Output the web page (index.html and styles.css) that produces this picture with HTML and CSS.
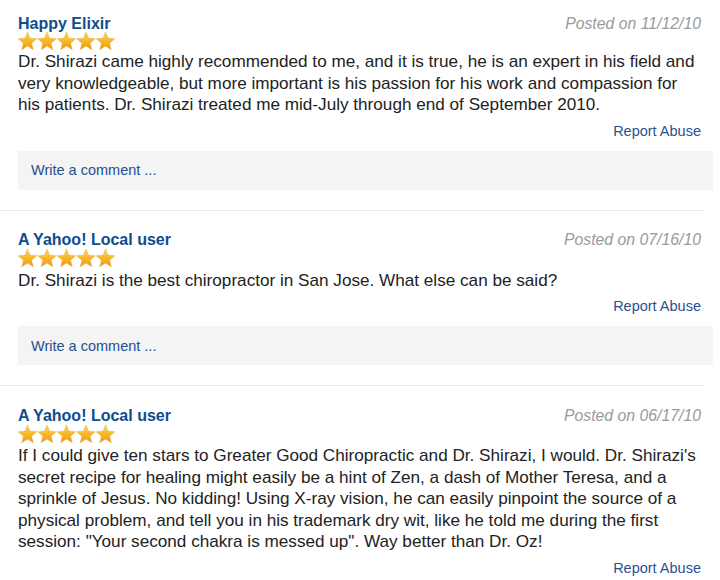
FILE: index.html
```html
<!DOCTYPE html>
<html>
<head>
<meta charset="utf-8">
<link rel="stylesheet" href="styles.css">
</head>
<body>
<div class="reviews">
  <div class="review first">
    <div class="head"><a class="name">Happy Elixir</a><span class="date">Posted on 11/12/10</span></div>
    <div class="stars"><svg width="98" height="18" viewBox="0 0 98 18"><defs><linearGradient id="sg1" x1="0" y1="0" x2="0" y2="1"><stop offset="0" stop-color="#ffd95a"/><stop offset="0.55" stop-color="#f6b526"/><stop offset="1" stop-color="#ea9a0c"/></linearGradient></defs><g fill="url(#sg1)" stroke="#e3a02a" stroke-width="0.4"><path d="M9.5 0 L12.03 6.32 L18.82 6.77 L13.59 11.13 L15.26 17.73 L9.5 14.1 L3.74 17.73 L5.41 11.13 L0.18 6.77 L6.97 6.32 Z"/><path transform="translate(19.5 0)" d="M9.5 0 L12.03 6.32 L18.82 6.77 L13.59 11.13 L15.26 17.73 L9.5 14.1 L3.74 17.73 L5.41 11.13 L0.18 6.77 L6.97 6.32 Z"/><path transform="translate(39 0)" d="M9.5 0 L12.03 6.32 L18.82 6.77 L13.59 11.13 L15.26 17.73 L9.5 14.1 L3.74 17.73 L5.41 11.13 L0.18 6.77 L6.97 6.32 Z"/><path transform="translate(58.5 0)" d="M9.5 0 L12.03 6.32 L18.82 6.77 L13.59 11.13 L15.26 17.73 L9.5 14.1 L3.74 17.73 L5.41 11.13 L0.18 6.77 L6.97 6.32 Z"/><path transform="translate(78 0)" d="M9.5 0 L12.03 6.32 L18.82 6.77 L13.59 11.13 L15.26 17.73 L9.5 14.1 L3.74 17.73 L5.41 11.13 L0.18 6.77 L6.97 6.32 Z"/></g></svg></div>
    <p class="text">Dr. Shirazi came highly recommended to me, and it is true, he is an expert in his field and very knowledgeable, but more important is his passion for his work and compassion for his patients. Dr. Shirazi treated me mid-July through end of September 2010.</p>
    <div class="report"><a>Report Abuse</a></div>
    <div class="comment">Write a comment ...</div>
  </div>
  <div class="review">
    <div class="head"><a class="name">A Yahoo! Local user</a><span class="date">Posted on 07/16/10</span></div>
    <div class="stars"><svg width="98" height="18" viewBox="0 0 98 18"><defs><linearGradient id="sg2" x1="0" y1="0" x2="0" y2="1"><stop offset="0" stop-color="#ffd95a"/><stop offset="0.55" stop-color="#f6b526"/><stop offset="1" stop-color="#ea9a0c"/></linearGradient></defs><g fill="url(#sg2)" stroke="#e3a02a" stroke-width="0.4"><path d="M9.5 0 L12.03 6.32 L18.82 6.77 L13.59 11.13 L15.26 17.73 L9.5 14.1 L3.74 17.73 L5.41 11.13 L0.18 6.77 L6.97 6.32 Z"/><path transform="translate(19.5 0)" d="M9.5 0 L12.03 6.32 L18.82 6.77 L13.59 11.13 L15.26 17.73 L9.5 14.1 L3.74 17.73 L5.41 11.13 L0.18 6.77 L6.97 6.32 Z"/><path transform="translate(39 0)" d="M9.5 0 L12.03 6.32 L18.82 6.77 L13.59 11.13 L15.26 17.73 L9.5 14.1 L3.74 17.73 L5.41 11.13 L0.18 6.77 L6.97 6.32 Z"/><path transform="translate(58.5 0)" d="M9.5 0 L12.03 6.32 L18.82 6.77 L13.59 11.13 L15.26 17.73 L9.5 14.1 L3.74 17.73 L5.41 11.13 L0.18 6.77 L6.97 6.32 Z"/><path transform="translate(78 0)" d="M9.5 0 L12.03 6.32 L18.82 6.77 L13.59 11.13 L15.26 17.73 L9.5 14.1 L3.74 17.73 L5.41 11.13 L0.18 6.77 L6.97 6.32 Z"/></g></svg></div>
    <p class="text">Dr. Shirazi is the best chiropractor in San Jose. What else can be said?</p>
    <div class="report"><a>Report Abuse</a></div>
    <div class="comment">Write a comment ...</div>
  </div>
  <div class="review">
    <div class="head"><a class="name">A Yahoo! Local user</a><span class="date">Posted on 06/17/10</span></div>
    <div class="stars"><svg width="98" height="18" viewBox="0 0 98 18"><defs><linearGradient id="sg3" x1="0" y1="0" x2="0" y2="1"><stop offset="0" stop-color="#ffd95a"/><stop offset="0.55" stop-color="#f6b526"/><stop offset="1" stop-color="#ea9a0c"/></linearGradient></defs><g fill="url(#sg3)" stroke="#e3a02a" stroke-width="0.4"><path d="M9.5 0 L12.03 6.32 L18.82 6.77 L13.59 11.13 L15.26 17.73 L9.5 14.1 L3.74 17.73 L5.41 11.13 L0.18 6.77 L6.97 6.32 Z"/><path transform="translate(19.5 0)" d="M9.5 0 L12.03 6.32 L18.82 6.77 L13.59 11.13 L15.26 17.73 L9.5 14.1 L3.74 17.73 L5.41 11.13 L0.18 6.77 L6.97 6.32 Z"/><path transform="translate(39 0)" d="M9.5 0 L12.03 6.32 L18.82 6.77 L13.59 11.13 L15.26 17.73 L9.5 14.1 L3.74 17.73 L5.41 11.13 L0.18 6.77 L6.97 6.32 Z"/><path transform="translate(58.5 0)" d="M9.5 0 L12.03 6.32 L18.82 6.77 L13.59 11.13 L15.26 17.73 L9.5 14.1 L3.74 17.73 L5.41 11.13 L0.18 6.77 L6.97 6.32 Z"/><path transform="translate(78 0)" d="M9.5 0 L12.03 6.32 L18.82 6.77 L13.59 11.13 L15.26 17.73 L9.5 14.1 L3.74 17.73 L5.41 11.13 L0.18 6.77 L6.97 6.32 Z"/></g></svg></div>
    <p class="text">If I could give ten stars to Greater Good Chiropractic and Dr. Shirazi, I would. Dr. Shirazi's secret recipe for healing might easily be a hint of Zen, a dash of Mother Teresa, and a sprinkle of Jesus. No kidding! Using X-ray vision, he can easily pinpoint the source of a physical problem, and tell you in his trademark dry wit, like he told me during the first session: "Your second chakra is messed up". Way better than Dr. Oz!</p>
    <div class="report"><a>Report Abuse</a></div>
  </div>
</div>
</body>
</html>
```

FILE: styles.css
```css
html, body {
  margin: 0;
  padding: 0;
  background: #ffffff;
}
body {
  font-family: "Liberation Sans", Arial, Helvetica, sans-serif;
  color: #222222;
  overflow: hidden;
}
.reviews {
  width: 703px;
}
.review {
  padding: 20.5px 2px 20px 18px;
  border-bottom: 1px dotted #d6d6d6;
}
.review.first {
  padding-top: 15px;
}
.head {
  display: flex;
  justify-content: space-between;
  align-items: baseline;
}
.name {
  font-size: 16px;
  line-height: 17px;
  font-weight: bold;
  color: #0f4c8c;
}
.date {
  font-size: 15.8px;
  line-height: 17px;
  font-style: italic;
  color: #9a9a9a;
}
.stars {
  height: 21.5px;
  display: flex;
  align-items: flex-start;
  padding-top: 1px;
  box-sizing: border-box;
}
.review.first .stars {
  height: 19px;
  padding-top: 0;
}
.stars svg {
  display: block;
}
.text {
  margin: 0;
  font-size: 17.15px;
  line-height: 21.5px;
  color: #222222;
  margin-right: -2px;
}
.report {
  margin-top: 7px;
  text-align: right;
  font-size: 14.5px;
  line-height: 17px;
}
.report a {
  color: #2a5194;
}
.comment {
  margin-top: 11px;
  margin-right: -12px;
  height: 39px;
  box-sizing: border-box;
  padding-left: 13px;
  display: flex;
  align-items: center;
  background: #f4f4f4;
  font-size: 14.5px;
  color: #1f4f8e;
}
```
